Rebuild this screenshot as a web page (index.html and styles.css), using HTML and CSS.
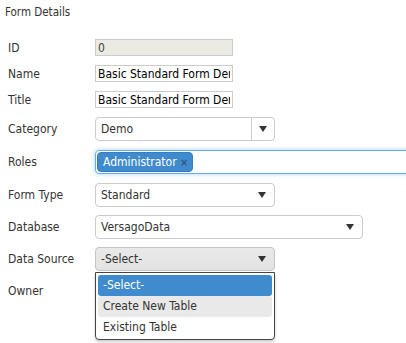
FILE: index.html
```html
<!DOCTYPE html>
<html lang="en">
<head>
  <meta charset="UTF-8" />
  <title>Form Details</title>
  <link rel="stylesheet" href="styles.css">
</head>
<body>
  <div class="panel">
    <div class="panel-title">Form Details</div>

    <div class="row row-text">
      <label>ID</label>
      <input class="textbox readonly" type="text" value="0" readonly />
    </div>
    <div class="row row-text">
      <label>Name</label>
      <input class="textbox" type="text" value="Basic Standard Form Demo" />
    </div>
    <div class="row row-text">
      <label>Title</label>
      <input class="textbox" type="text" value="Basic Standard Form Demo" />
    </div>

    <div class="row row-loose">
      <label>Category</label>
      <div class="combo w-180">
        <span class="value">Demo</span>
        <span class="combo-btn"><span class="caret"></span></span>
      </div>
    </div>

    <div class="row row-loose">
      <label>Roles</label>
      <div class="multiselect">
        <span class="tag">Administrator <span class="tag-x">×</span></span>
      </div>
    </div>

    <div class="row">
      <label>Form Type</label>
      <div class="dropdown w-180">
        <span class="value">Standard</span>
        <span class="caret"></span>
      </div>
    </div>

    <div class="row">
      <label>Database</label>
      <div class="dropdown w-268">
        <span class="value">VersagoData</span>
        <span class="caret"></span>
      </div>
    </div>

    <div class="row">
      <label>Data Source</label>
      <div class="dropdown w-180 open">
        <span class="value">-Select-</span>
        <span class="caret"></span>
        <ul class="popup">
          <li class="selected">-Select-</li>
          <li class="hover">Create New Table</li>
          <li>Existing Table</li>
        </ul>
      </div>
    </div>

    <div class="row">
      <label>Owner</label>
    </div>
  </div>
</body>
</html>
```

FILE: styles.css
```css
html, body {
  height: 100%;
}
body {
  margin: 0;
  background: #fff;
  color: #333;
  font-family: Tahoma, "DejaVu Sans Condensed", "DejaVu Sans", sans-serif;
  font-size: 12px;
}
.panel {
  padding: 5px 0 0 5px;
  min-height: 343px;
  box-sizing: border-box;
}
.panel-title {
  font-size: 11.5px;
  height: 14px;
  line-height: 14px;
  margin-bottom: 20px;
}
.row {
  display: flex;
  align-items: center;
  height: 24px;
  margin-bottom: 8px;
}
.row-loose {
  margin-bottom: 9px;
}
.row-text {
  height: 17px;
  margin-bottom: 9px;
}
.row-text + .row-loose {
  margin-top: 1px;
}
.row label {
  width: 87px;
  flex: none;
  padding-left: 3px;
}
.textbox {
  box-sizing: border-box;
  width: 138px;
  height: 17px;
  margin: 0;
  padding: 0 2px;
  border: 1px solid #ccc;
  font: inherit;
  color: #000;
  background: #fff;
  outline: none;
}
.textbox.readonly {
  background: #ebebe4;
  color: #444;
}
.w-180 { width: 180px; }
.w-268 { width: 268px; }
.combo,
.dropdown {
  box-sizing: border-box;
  height: 24px;
  display: flex;
  align-items: center;
  border: 1px solid #ccc;
  border-radius: 4px;
  background: #fff;
  position: relative;
}
.value {
  flex: 1;
  padding-left: 5px;
  color: #333;
}
.combo-btn {
  width: 22px;
  height: 100%;
  border-left: 1px solid #ccc;
  display: flex;
  align-items: center;
  justify-content: center;
}
.caret {
  width: 0;
  height: 0;
  border-left: 4px solid transparent;
  border-right: 4px solid transparent;
  border-top: 6px solid #333;
}
.dropdown .caret {
  margin-right: 8px;
}
.dropdown.open {
  background: linear-gradient(#e9e9e9, #e3e3e3);
  border-color: #c5c5c5;
}
.multiselect {
  box-sizing: border-box;
  flex: none;
  width: 320px;
  height: 24px;
  border: 1px solid #66afe9;
  border-radius: 4px;
  box-shadow: 0 0 4px rgba(102, 175, 233, 0.6);
  display: flex;
  align-items: center;
  padding-left: 1px;
}
.tag {
  background: #3f8bcd;
  color: #fff;
  border: 1px solid #357ebd;
  border-radius: 4px;
  height: 20px;
  line-height: 19px;
  box-sizing: border-box;
  padding: 0 4px 0 5px;
}
.tag-x {
  color: #2a4a6a;
  font-size: 11px;
}
.popup {
  position: absolute;
  top: 24px;
  left: -1px;
  width: 180px;
  box-sizing: border-box;
  margin: 0;
  padding: 2px 2px 1px;
  list-style: none;
  background: #fff;
  border: 1px solid #444;
  border-radius: 0 0 4px 4px;
  box-shadow: 0 2px 3px rgba(0, 0, 0, 0.2);
  z-index: 2;
}
.popup li {
  height: 21px;
  line-height: 21px;
  padding-left: 5px;
  border-radius: 3px;
}
.popup li.selected {
  background: #3f8bcd;
  color: #fff;
}
.popup li.hover {
  background: #e9e9e9;
}
```
